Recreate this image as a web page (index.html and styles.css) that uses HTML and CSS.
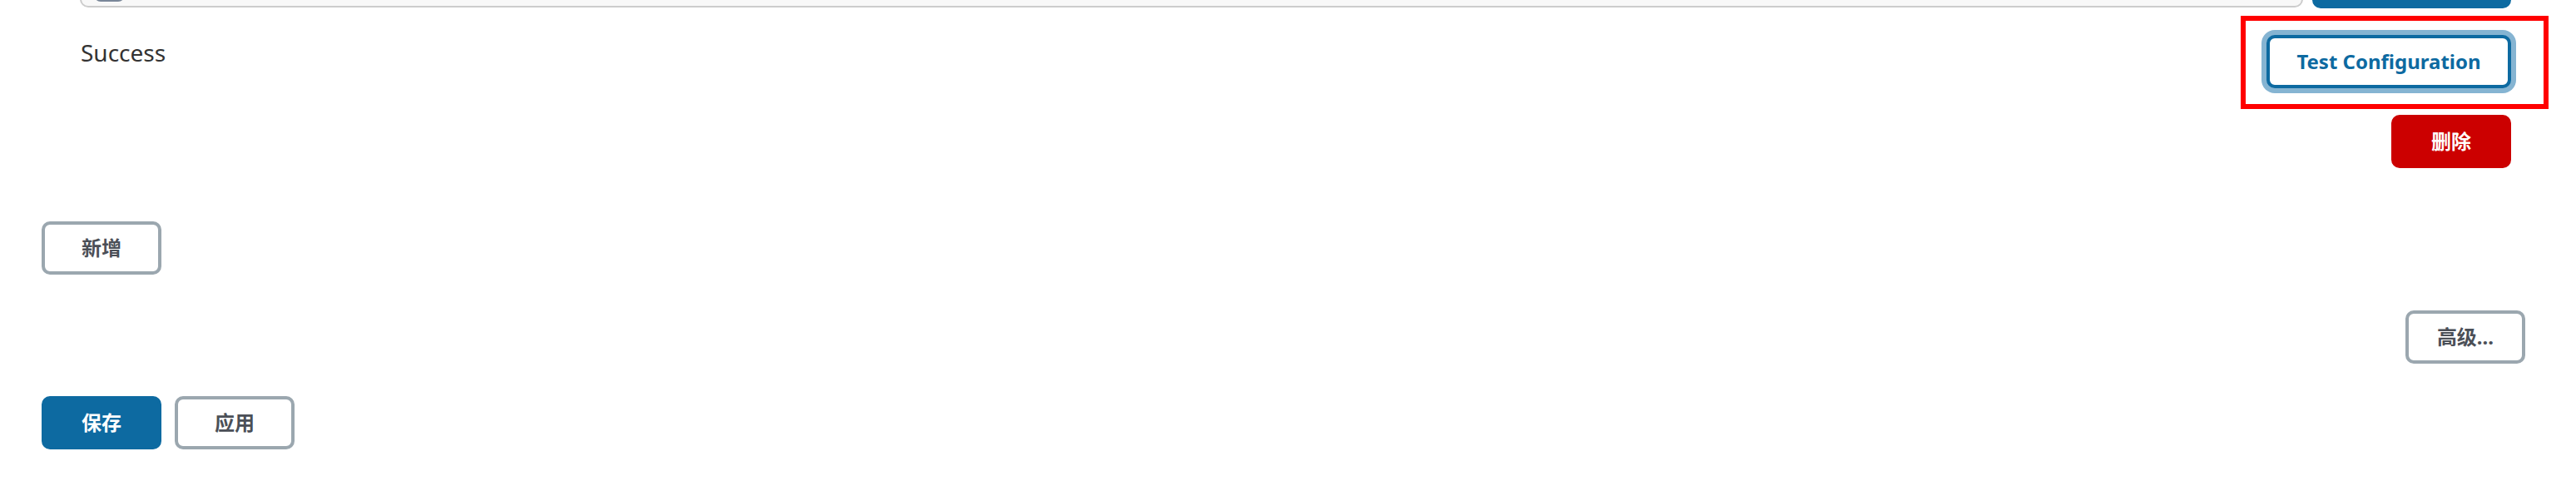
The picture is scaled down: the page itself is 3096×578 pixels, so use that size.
FILE: index.html
```html
<!DOCTYPE html>
<html lang="zh">
<head>
<meta charset="utf-8">
<title>Config</title>
<link rel="stylesheet" href="styles.css">
</head>
<body>
<div class="page">
  <div class="chunk">
    <div class="row-top">
      <div class="field"><span class="chip"></span></div>
      <button class="btn btn-primary btn-wide" type="button"></button>
    </div>
    <div class="row-test">
      <div class="status">Success</div>
      <div class="test-wrap">
        <button class="btn btn-outline-primary" type="button">Test Configuration</button>
        <div class="annot"></div>
      </div>
    </div>
    <div class="row-delete">
      <button class="btn btn-danger" type="button">删除</button>
    </div>
  </div>
  <div class="row-add">
    <button class="btn btn-secondary" type="button">新增</button>
  </div>
  <div class="row-advanced">
    <button class="btn btn-secondary" type="button">高级...</button>
  </div>
  <div class="row-save">
    <button class="btn btn-primary" type="button">保存</button>
    <button class="btn btn-secondary" type="button">应用</button>
  </div>
</div>
</body>
</html>
```
FILE: styles.css
```css
html, body {
  margin: 0;
  padding: 0;
  background: #ffffff;
}
body {
  font-family: "Noto Sans", "Noto Sans CJK SC", sans-serif;
  color: #333333;
  overflow: hidden;
}
.page {
  padding: 0 61px 0 50px;
}
.chunk {
  margin: 0 17px 0 46px;
}
.row-top {
  display: flex;
  gap: 11px;
  margin-top: -54px;
}
.field {
  flex: 1;
  height: 63px;
  box-sizing: border-box;
  border: 2px solid #cccccc;
  border-radius: 10px;
  background: #f8f8f8;
  display: flex;
  align-items: flex-end;
  padding: 0 0 5px 15px;
}
.chip {
  width: 37px;
  height: 40px;
  background: #7a8799;
  border-radius: 8px;
}
.btn {
  font-family: "Noto Sans", "Noto Sans CJK SC", sans-serif;
  font-size: 24px;
  font-weight: 700;
  height: 64px;
  min-width: 144px;
  box-sizing: border-box;
  padding: 0 30px;
  border-radius: 10px;
  border: 4px solid transparent;
  background: #ffffff;
  cursor: pointer;
  display: inline-flex;
  align-items: center;
  justify-content: center;
  line-height: 1;
}
.btn-wide {
  width: 239px;
}
.btn-primary {
  background: #0d6aa1;
  border-color: #0d6aa1;
  color: #ffffff;
}
.btn-secondary {
  border-color: #9ba7af;
  color: #4b4f57;
}
.btn-danger {
  background: #cc0000;
  border-color: #cc0000;
  color: #ffffff;
}
.btn-outline-primary {
  border-color: #0d6aa1;
  color: #0d6aa1;
  box-shadow: 0 0 0 6px #85b4d2;
  width: 294px;
  padding: 0;
}
.row-test {
  display: flex;
  justify-content: space-between;
  align-items: flex-start;
  margin-top: 32px;
}
.status {
  font-size: 28px;
  line-height: 42px;
  color: #333333;
  padding-left: 1px;
}
.test-wrap {
  position: relative;
}
.annot {
  position: absolute;
  top: -23px;
  left: -31px;
  right: -45px;
  bottom: -25px;
  border: 6px solid #ff0000;
  pointer-events: none;
}
.row-delete {
  display: flex;
  justify-content: flex-end;
  margin-top: 32px;
}
.row-add {
  margin-top: 64px;
  display: flex;
}
.row-advanced {
  display: flex;
  justify-content: flex-end;
  margin-top: 43px;
}
.row-save {
  display: flex;
  gap: 16px;
  margin-top: 39px;
}
```
